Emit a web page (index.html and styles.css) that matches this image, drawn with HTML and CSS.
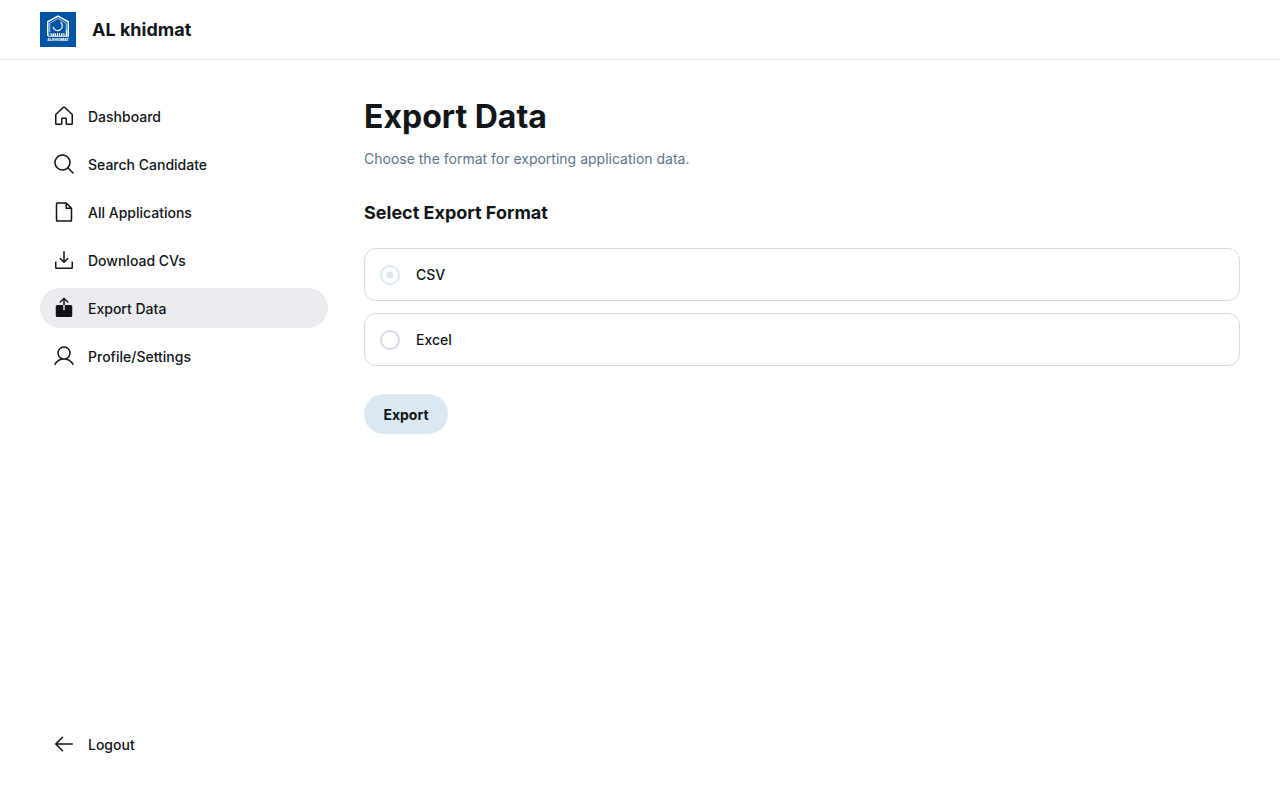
FILE: index.html
```html
<!DOCTYPE html>
<html lang="en">
<head>
<meta charset="utf-8">
<meta name="viewport" content="width=device-width, initial-scale=1">
<title>Export Data - AL khidmat</title>
<link rel="stylesheet" href="styles.css">
</head>
<body>
<div class="app">
  <header class="topbar">
    <svg class="logo" viewBox="0 0 72 70" aria-hidden="true">
      <rect width="72" height="70" fill="#0054a6"/>
      <g fill="none" stroke="#fff">
        <path d="M15.500 48V19.500L36 8l20.500 11.500V49" stroke-width="3"/>
        <path d="M19.500 40V22.500L36 13l16.500 9.500V48" stroke-width="1.400"/>
        <path d="M41 20a9.500 9.500 0 1 1-15 10" stroke-width="2.400"/>
        <path d="M16 48.500h41M19 44h5v4M27 48v-4h4v4M35 48v-6M39 48v-6M43 48v-4h5v4M53 48v-12" stroke-width="2.200"/>
      </g>
      <text class="logo-text" x="36" y="58" text-anchor="middle">ALKHIDMAT</text>
    </svg>
    <span class="brand">AL khidmat</span>
  </header>
  <div class="body">
    <nav class="sidebar" aria-label="Main">
      <a class="nav-item" href="#">
        <svg class="icon" viewBox="0 0 256 256" aria-hidden="true"><path d="M218.830,103.770l-80-75.480a1.140,1.140,0,0,1-.11-.11,16,16,0,0,0-21.530,0l-.11.110L37.170,103.770A16,16,0,0,0,32,115.550V208a16,16,0,0,0,16,16H96a16,16,0,0,0,16-16V160h32v48a16,16,0,0,0,16,16h48a16,16,0,0,0,16-16V115.550A16,16,0,0,0,218.830,103.770ZM208,208H160V160a16,16,0,0,0-16-16H112a16,16,0,0,0-16,16v48H48V115.550l.11-.1L128,40l79.900,75.430.1.100Z"/></svg>
        <span>Dashboard</span>
      </a>
      <a class="nav-item" href="#">
        <svg class="icon" viewBox="0 0 256 256" aria-hidden="true"><path d="M229.660,218.340l-50.070-50.060a88.110,88.110,0,1,0-11.310,11.310l50.060,50.070a8,8,0,0,0,11.320-11.320ZM40,112a72,72,0,1,1,72,72A72.080,72.080,0,0,1,40,112Z"/></svg>
        <span>Search Candidate</span>
      </a>
      <a class="nav-item" href="#">
        <svg class="icon" viewBox="0 0 256 256" aria-hidden="true"><path d="M213.660,82.340l-56-56A8,8,0,0,0,152,24H56A16,16,0,0,0,40,40V216a16,16,0,0,0,16,16H200a16,16,0,0,0,16-16V88A8,8,0,0,0,213.660,82.340ZM160,51.310,188.690,80H160ZM200,216H56V40h88V88a8,8,0,0,0,8,8h48V216Z"/></svg>
        <span>All Applications</span>
      </a>
      <a class="nav-item" href="#">
        <svg class="icon" viewBox="0 0 256 256" aria-hidden="true"><path d="M224,152v56a16,16,0,0,1-16,16H48a16,16,0,0,1-16-16V152a8,8,0,0,1,16,0v56H208V152a8,8,0,0,1,16,0Zm-101.660,5.660a8,8,0,0,0,11.320,0l40-40a8,8,0,0,0-11.320-11.320L136,132.690V40a8,8,0,0,0-16,0v92.690L93.660,106.340a8,8,0,0,0-11.320,11.320Z"/></svg>
        <span>Download CVs</span>
      </a>
      <a class="nav-item active" href="#" aria-current="page">
        <svg class="icon" viewBox="0 0 256 256" aria-hidden="true"><path d="M216,112v96a16,16,0,0,1-16,16H56a16,16,0,0,1-16-16V112A16,16,0,0,1,56,96h64v48a8,8,0,0,0,16,0V96h64A16,16,0,0,1,216,112ZM136,43.310l26.340,26.350a8,8,0,0,0,11.320-11.320l-40-40a8,8,0,0,0-11.320,0l-40,40A8,8,0,0,0,93.660,69.660L120,43.310V96h16Z"/></svg>
        <span>Export Data</span>
      </a>
      <a class="nav-item" href="#">
        <svg class="icon" viewBox="0 0 256 256" aria-hidden="true"><path d="M230.920,212c-15.230-26.330-38.700-45.210-66.090-54.160a72,72,0,1,0-73.660,0C63.780,166.780,40.310,185.660,25.080,212a8,8,0,1,0,13.850,8c18.840-32.560,52.140-52,89.070-52s70.230,19.440,89.070,52a8,8,0,1,0,13.850-8ZM72,96a56,56,0,1,1,56,56A56.060,56.060,0,0,1,72,96Z"/></svg>
        <span>Profile/Settings</span>
      </a>
      <a class="nav-item logout" href="#">
        <svg class="icon" viewBox="0 0 256 256" aria-hidden="true"><path d="M224,128a8,8,0,0,1-8,8H59.310l58.350,58.340a8,8,0,0,1-11.320,11.320l-72-72a8,8,0,0,1,0-11.320l72-72a8,8,0,0,1,11.320,11.320L59.310,120H216A8,8,0,0,1,224,128Z"/></svg>
        <span>Logout</span>
      </a>
    </nav>
    <main class="content">
      <h1 class="title">Export Data</h1>
      <p class="subtitle">Choose the format for exporting application data.</p>
      <form>
        <fieldset class="formats">
          <legend class="section-title">Select Export Format</legend>
          <label class="option"><input class="radio" type="radio" name="format" value="csv" checked><span>CSV</span></label>
          <label class="option"><input class="radio" type="radio" name="format" value="excel"><span>Excel</span></label>
        </fieldset>
        <button class="export" type="button">Export</button>
      </form>
    </main>
  </div>
</div>
</body>
</html>
```
FILE: styles.css
```css
* {
  box-sizing: border-box;
}

body {
  margin: 0;
  background: #fff;
  color: #101518;
  font-family: Inter, "Liberation Sans", sans-serif;
  font-size: 14px;
  line-height: 21px;
}

.app {
  display: flex;
  flex-direction: column;
  min-height: 100vh;
}

.topbar {
  display: flex;
  align-items: center;
  gap: 16px;
  padding: 12px 40px;
  border-bottom: 1px solid #e5e7eb;
}

.logo {
  width: 36px;
  height: 35px;
}

.logo-text {
  fill: #fff;
  font-size: 7px;
  font-weight: 800;
}

.brand {
  font-size: 18px;
  font-weight: 700;
  line-height: 23px;
}

.body {
  display: flex;
  flex: 1;
  gap: 36px;
  padding: 36px 40px 41px;
}

.sidebar {
  display: flex;
  flex: 0 0 288px;
  flex-direction: column;
  gap: 8px;
}

.nav-item {
  display: flex;
  align-items: center;
  gap: 12px;
  padding: 8px 12px;
  border-radius: 20px;
  color: inherit;
  font-weight: 500;
  text-decoration: none;
}

.active {
  background: #ebecf1;
}

.logout {
  margin-top: auto;
}

.icon {
  width: 24px;
  height: 24px;
  fill: currentColor;
}

.content {
  flex: 1;
  min-width: 0;
}

.title {
  margin: 0 0 10px;
  font-size: 32px;
  font-weight: 700;
  line-height: 42px;
}

.subtitle {
  margin: 0 0 32px;
  color: #5c748a;
}

.formats {
  display: flex;
  flex-direction: column;
  gap: 12px;
  margin: 0 0 28px;
  padding: 0;
  border: 0;
}

.section-title {
  margin-bottom: 24px;
  padding: 0;
  font-size: 18px;
  font-weight: 700;
  line-height: 23px;
}

.option {
  display: flex;
  align-items: center;
  gap: 16px;
  padding: 15px;
  border: 1px solid #d4dbe4;
  border-radius: 12px;
  font-weight: 500;
}

.radio {
  width: 20px;
  height: 20px;
  margin: 0;
  appearance: none;
  border: 2px solid #d4dbe4;
  border-radius: 50%;
}

.radio:checked {
  border-color: #dbe8f2;
  background: radial-gradient(circle, #dbe8f2 0 3px, transparent 4px);
}

.export {
  min-width: 84px;
  height: 40px;
  padding: 0 16px;
  border: 0;
  border-radius: 20px;
  background: #dbe8f2;
  color: inherit;
  font: inherit;
  font-weight: 700;
}
```
